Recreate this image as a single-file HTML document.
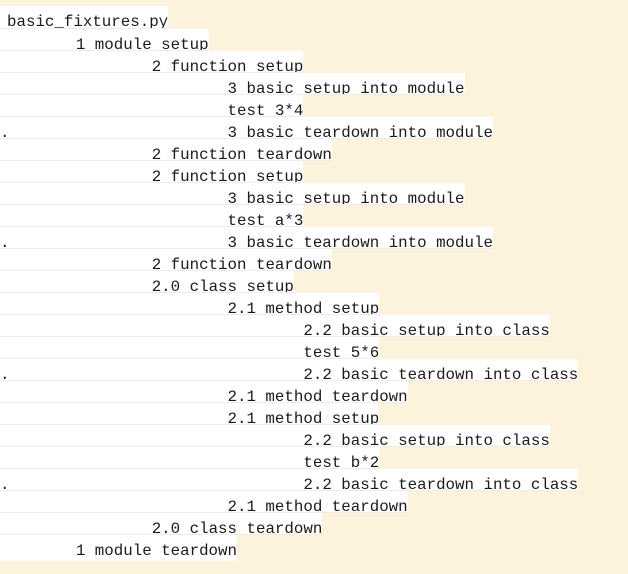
<!DOCTYPE html>
<html><head><meta charset="utf-8"><style>
html,body{margin:0;padding:0;background:#fdf3dc;width:628px;height:574px;overflow:hidden}
#w{position:absolute;top:6px;left:0}
.l{display:block;width:fit-content;height:22px;box-sizing:border-box;padding-top:5px;line-height:22px;overflow:hidden;background:#fff;border-bottom:1px solid #ececec;font-family:"Liberation Mono",monospace;font-size:15.8px;color:#1a1a1a;white-space:pre;tab-size:8;-moz-tab-size:8}
.f{padding-left:7px;height:23px;padding-top:5px}
.z{height:26px;border-bottom:none}
</style></head><body><div id="w">
<div class="l f">basic_fixtures.py</div>
<div class="l">	1 module setup</div>
<div class="l">		2 function setup</div>
<div class="l">			3 basic setup into module</div>
<div class="l">			test 3*4</div>
<div class="l">.			3 basic teardown into module</div>
<div class="l">		2 function teardown</div>
<div class="l">		2 function setup</div>
<div class="l">			3 basic setup into module</div>
<div class="l">			test a*3</div>
<div class="l">.			3 basic teardown into module</div>
<div class="l">		2 function teardown</div>
<div class="l">		2.0 class setup</div>
<div class="l">			2.1 method setup</div>
<div class="l">				2.2 basic setup into class</div>
<div class="l">				test 5*6</div>
<div class="l">.				2.2 basic teardown into class</div>
<div class="l">			2.1 method teardown</div>
<div class="l">			2.1 method setup</div>
<div class="l">				2.2 basic setup into class</div>
<div class="l">				test b*2</div>
<div class="l">.				2.2 basic teardown into class</div>
<div class="l">			2.1 method teardown</div>
<div class="l">		2.0 class teardown</div>
<div class="l z">	1 module teardown</div>
</div></body></html>
